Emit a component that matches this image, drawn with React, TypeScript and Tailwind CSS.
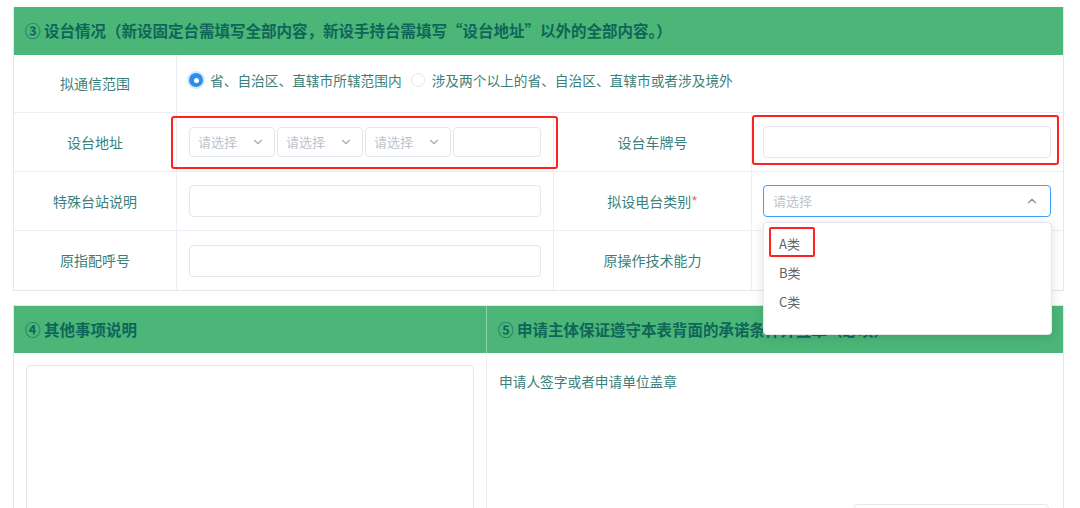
import React from 'react';
import { ChevronDown, ChevronUp } from 'lucide-react';

const font = "font-['Noto_Sans_CJK_SC','Noto_Sans',sans-serif]";

const Label: React.FC<{ text: string; required?: boolean; last?: boolean }> = ({ text, required, last }) => (
  <div className={`flex items-center justify-center border-r border-[#ebeef5] text-[14px] text-[#3a7f7b] ${last ? '' : 'border-b'}`}>
    {text}
    {required && <span className="text-[#f56c6c]">*</span>}
  </div>
);

const Placeholder: React.FC<{ w: string }> = ({ w }) => (
  <div className={`${w} h-[30px] flex items-center justify-between pl-[8px] pr-[9px] border border-[#e4e7ed] rounded-[4px] bg-white`}>
    <span className="text-[13px] text-[#c0c4cc]">请选择</span>
    <ChevronDown size={14} strokeWidth={2} className="text-[#a8abb2]" />
  </div>
);

const Input: React.FC<{ w: string }> = ({ w }) => (
  <div className={`${w} h-[32px] border border-[#e4e7ed] rounded-[4px] bg-white`} />
);

const Radio: React.FC<{ checked?: boolean; text: string }> = ({ checked, text }) => (
  <div className="flex items-center gap-[7px] mr-[9px]">
    {checked ? (
      <span className="w-[14px] h-[14px] rounded-full bg-[#2f8cf0] flex items-center justify-center ring-2 ring-[#d6e8fc]">
        <span className="w-[5px] h-[5px] rounded-full bg-white" />
      </span>
    ) : (
      <span className="w-[14px] h-[14px] rounded-full border border-[#e4e7ed] bg-white" />
    )}
    <span className="text-[13.7px] text-[#3a7f7b]">{text}</span>
  </div>
);

export default function App() {
  return (
    <div className={`relative w-[1080px] h-[508px] overflow-hidden bg-white ${font}`}>
      <div className="pl-[13px] pt-[7px]">
        {/* section 3 */}
        <div className="w-[1051px] border-x border-b border-[#e4e7ed]">
          <div className="h-[48px] bg-[#4bb678] flex items-center pl-[11px] text-[15.5px] font-bold text-[#0f6658]">
            ③ 设台情况（新设固定台需填写全部内容，新设手持台需填写“设台地址”以外的全部内容。）
          </div>
          <div className="grid grid-cols-[163px_377px_198px_311px] grid-rows-[58px_59px_59px_59px]">
            <Label text="拟通信范围" />
            <div className="col-span-3 border-b border-[#ebeef5] flex items-start pt-[15px] pl-[12px]">
              <Radio checked text="省、自治区、直辖市所辖范围内" />
              <Radio text="涉及两个以上的省、自治区、直辖市或者涉及境外" />
            </div>

            <Label text="设台地址" />
            <div className="relative border-r border-b border-[#ebeef5] flex items-center pl-[12px] gap-[2px]">
              <Placeholder w="w-[86px]" />
              <Placeholder w="w-[86px]" />
              <Placeholder w="w-[86px]" />
              <div className="w-[88px] h-[30px] border border-[#e4e7ed] rounded-[4px]" />
              <div className="absolute left-[-6px] top-[3px] w-[387px] h-[53px] border-2 border-[#ff2020] rounded-[3px]" />
            </div>
            <Label text="设台车牌号" />
            <div className="relative border-b border-[#ebeef5] flex items-center pl-[11px]">
              <Input w="w-[288px]" />
              <div className="absolute left-[0px] top-[2px] w-[307px] h-[50px] border-2 border-[#ff2020] rounded-[3px]" />
            </div>

            <Label text="特殊台站说明" />
            <div className="border-r border-b border-[#ebeef5] flex items-center pl-[12px]">
              <Input w="w-[352px]" />
            </div>
            <Label text="拟设电台类别" required />
            <div className="border-b border-[#ebeef5] flex items-center pl-[11px]">
              <div className="w-[288px] h-[32px] border border-[#409eff] rounded-[4px] flex items-center justify-between pl-[9px] pr-[11px]">
                <span className="text-[13px] text-[#c0c4cc]">请选择</span>
                <ChevronUp size={14} strokeWidth={2} className="text-[#8c8f96]" />
              </div>
            </div>

            <Label text="原指配呼号" last />
            <div className="border-r border-[#ebeef5] flex items-center pl-[12px]">
              <Input w="w-[352px]" />
            </div>
            <Label text="原操作技术能力" last />
            <div />
          </div>
        </div>

        {/* sections 4 & 5 */}
        <div className="mt-[14px] w-[1051px] border-x border-t border-[#e4e7ed] grid grid-cols-[473px_1fr]">
          <div className="h-[47px] bg-[#4bb678] flex items-center pl-[11px] text-[15.5px] font-bold text-[#0f6658] border-r border-[#8fd1a8]">
            ④ 其他事项说明
          </div>
          <div className="h-[47px] bg-[#4bb678] flex items-center pl-[11px] text-[15.5px] font-bold text-[#0f6658]">
            ⑤ 申请主体保证遵守本表背面的承诺条件并签章（必填）
          </div>
          <div className="border-r border-[#ebeef5] pt-[12px] pl-[12px] pr-[12px]">
            <div className="w-[448px] h-[180px] border border-[#e4e7ed] rounded-[4px]" />
          </div>
          <div className="flex flex-col pt-[18px] pl-[12px] pr-[14px]">
            <span className="text-[13.7px] text-[#3a7f7b] leading-[20px]">申请人签字或者申请单位盖章</span>
            <div className="self-end mt-[113px] w-[195px] h-[40px] border border-[#e4e7ed] rounded-[4px]" />
          </div>
        </div>
      </div>

      {/* dropdown popup */}
      <div className="absolute left-[763px] top-[222px] w-[289px] h-[113px] bg-white border border-[#e4e7ed] rounded-[4px] shadow-[0_2px_12px_rgba(0,0,0,0.12)] pt-[6px]">
        <div className="relative h-[29px] flex items-center pl-[15px] text-[13px] text-[#606266]">
          A类
          <div className="absolute left-[5px] top-[-2px] w-[46px] h-[30px] border-2 border-[#ff2020] rounded-[2px]" />
        </div>
        <div className="h-[29px] flex items-center pl-[15px] text-[13px] text-[#606266]">B类</div>
        <div className="h-[29px] flex items-center pl-[15px] text-[13px] text-[#606266]">C类</div>
      </div>
    </div>
  );
}
